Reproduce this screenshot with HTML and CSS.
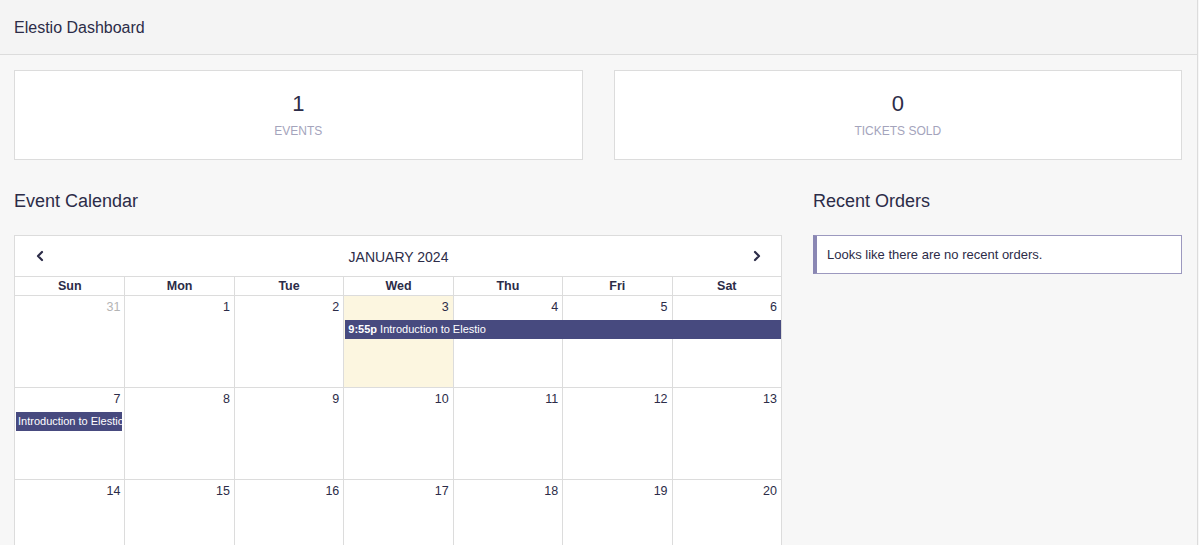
FILE: index.html
```html
<!DOCTYPE html>
<html lang="en">
<head>
    <meta charset="UTF-8">
    <meta name="viewport" content="width=device-width, initial-scale=1.0">
    <title>Elestio Dashboard</title>
    <link rel="stylesheet" href="styles.css">
</head>
<body>
    <div class="page">
        <div class="header">
            <h1>Elestio Dashboard</h1>
        </div>
        <div class="content">
            <div class="stats">
                <div class="stat-card">
                    <div class="stat-value">1</div>
                    <div class="stat-label">EVENTS</div>
                </div>
                <div class="stat-card">
                    <div class="stat-value">0</div>
                    <div class="stat-label">TICKETS SOLD</div>
                </div>
            </div>
            <div class="main">
                <div class="calendar-section">
                    <h2>Event Calendar</h2>
                    <div class="calendar">
                        <div class="cal-toolbar">
                            <span class="cal-nav">
                                <svg width="12" height="12" viewBox="0 0 12 12" fill="none" stroke="currentColor" stroke-width="2.2" stroke-linecap="round" stroke-linejoin="round">
                                    <path d="M8 2L4 6l4 4"></path>
                                </svg>
                            </span>
                            <span class="cal-title">JANUARY 2024</span>
                            <span class="cal-nav">
                                <svg width="12" height="12" viewBox="0 0 12 12" fill="none" stroke="currentColor" stroke-width="2.2" stroke-linecap="round" stroke-linejoin="round">
                                    <path d="M4 2l4 4-4 4"></path>
                                </svg>
                            </span>
                        </div>
                        <div class="cal-days">
                            <div>Sun</div><div>Mon</div><div>Tue</div><div>Wed</div><div>Thu</div><div>Fri</div><div>Sat</div>
                        </div>
                        <div class="week">
                            <div class="day other">31</div>
                            <div class="day">1</div>
                            <div class="day">2</div>
                            <div class="day today">3</div>
                            <div class="day">4</div>
                            <div class="day">5</div>
                            <div class="day">6</div>
                            <div class="event event-start"><b>9:55p</b> Introduction to Elestio</div>
                        </div>
                        <div class="week">
                            <div class="day">7</div>
                            <div class="day">8</div>
                            <div class="day">9</div>
                            <div class="day">10</div>
                            <div class="day">11</div>
                            <div class="day">12</div>
                            <div class="day">13</div>
                            <div class="event event-end">Introduction to Elestio</div>
                        </div>
                        <div class="week">
                            <div class="day">14</div>
                            <div class="day">15</div>
                            <div class="day">16</div>
                            <div class="day">17</div>
                            <div class="day">18</div>
                            <div class="day">19</div>
                            <div class="day">20</div>
                        </div>
                    </div>
                </div>
                <div class="orders-section">
                    <h2>Recent Orders</h2>
                    <div class="notice">Looks like there are no recent orders.</div>
                </div>
            </div>
        </div>
    </div>
</body>
</html>
```

FILE: styles.css
```css
body {
    margin: 0;
    background: #f7f7f7;
    font-family: "Liberation Sans", Arial, sans-serif;
    color: #2c2c48;
}
.page {
    width: 1197px;
    min-height: 545px;
    border-right: 1px solid #dcdcdc;
}
.header {
    background: #f4f4f4;
    height: 54px;
    border-bottom: 1px solid #dcdcdc;
    display: flex;
    align-items: center;
    padding: 0 14px;
}
.header h1 {
    font-size: 16px;
    font-weight: normal;
    margin: 0;
    padding-top: 1px;
}
.content {
    padding: 15px 15px 0 14px;
}
.stats {
    display: grid;
    grid-template-columns: 1fr 1fr;
    gap: 31px;
}
.stat-card {
    background: #fff;
    border: 1px solid #dcdcdc;
    height: 88px;
    text-align: center;
}
.stat-value {
    font-size: 22px;
    margin-top: 21px;
    line-height: 24px;
}
.stat-label {
    font-size: 12px;
    color: #a4a4bc;
    margin-top: 8px;
}
.main {
    display: grid;
    grid-template-columns: 768px 1fr;
    gap: 31px;
    margin-top: 31px;
}
.main h2 {
    font-size: 18px;
    font-weight: normal;
    margin: 0 0 23px 0;
    line-height: 21px;
}
.calendar {
    background: #fff;
    border: 1px solid #dcdcdc;
    border-bottom: none;
}
.cal-toolbar {
    height: 40px;
    display: flex;
    align-items: center;
    justify-content: space-between;
    padding: 0 18px 0 19px;
    border-bottom: 1px solid #dcdcdc;
}
.cal-nav {
    display: flex;
    color: #2c2c48;
}
.cal-title {
    font-size: 14px;
    padding-top: 1px;
}
.cal-days {
    display: grid;
    grid-template-columns: repeat(7, minmax(0, 1fr));
    border-bottom: 1px solid #dcdcdc;
}
.cal-days div {
    font-size: 12.5px;
    font-weight: bold;
    text-align: center;
    line-height: 18px;
    border-left: 1px solid #dcdcdc;
}
.cal-days div:first-child {
    border-left: none;
}
.week {
    display: grid;
    grid-template-columns: repeat(7, minmax(0, 1fr));
    grid-template-rows: 23px 21px 47px;
    border-bottom: 1px solid #dcdcdc;
}
.day {
    grid-row: 1 / 4;
    font-size: 12.5px;
    text-align: right;
    padding: 4px 4px 0 0;
    border-left: 1px solid #dcdcdc;
}
.day:nth-child(1) { grid-column: 1; border-left: none; }
.day:nth-child(2) { grid-column: 2; }
.day:nth-child(3) { grid-column: 3; }
.day:nth-child(4) { grid-column: 4; }
.day:nth-child(5) { grid-column: 5; }
.day:nth-child(6) { grid-column: 6; }
.day:nth-child(7) { grid-column: 7; }
.day.other {
    color: #b4b4b4;
}
.day.today {
    background: #fcf6e0;
}
.event {
    grid-row: 2;
    background: #474a7f;
    color: #fff;
    font-size: 11px;
    line-height: 19px;
    height: 19px;
    white-space: nowrap;
    overflow: hidden;
    padding-left: 3px;
    margin-top: 1px;
}
.event-start {
    grid-column: 4 / 8;
    margin-left: 2px;
}
.event-end {
    grid-column: 1 / 2;
    margin-left: 1px;
    margin-right: 2px;
    padding-left: 2px;
}
.notice {
    background: #fff;
    border: 1px solid #9c99bf;
    border-left: 4px solid #8a87b3;
    font-size: 13px;
    padding: 11px 10px 11px 10px;
    line-height: 15px;
}
```
